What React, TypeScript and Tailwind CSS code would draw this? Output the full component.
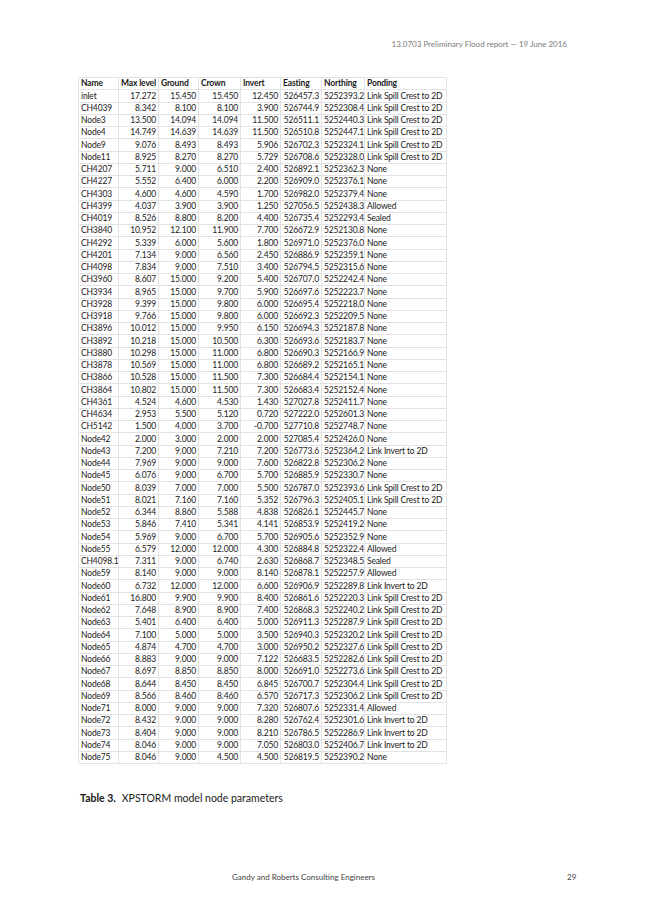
const rows: string[][] = [
  ["inlet", "17.272", "15.450", "15.450", "12.450", "526457.3", "5252393.2", "Link Spill Crest to 2D"],
  ["CH4039", "8.342", "8.100", "8.100", "3.900", "526744.9", "5252308.4", "Link Spill Crest to 2D"],
  ["Node3", "13.500", "14.094", "14.094", "11.500", "526511.1", "5252440.3", "Link Spill Crest to 2D"],
  ["Node4", "14.749", "14.639", "14.639", "11.500", "526510.8", "5252447.1", "Link Spill Crest to 2D"],
  ["Node9", "9.076", "8.493", "8.493", "5.906", "526702.3", "5252324.1", "Link Spill Crest to 2D"],
  ["Node11", "8.925", "8.270", "8.270", "5.729", "526708.6", "5252328.0", "Link Spill Crest to 2D"],
  ["CH4207", "5.711", "9.000", "6.510", "2.400", "526892.1", "5252362.3", "None"],
  ["CH4227", "5.552", "6.400", "6.000", "2.200", "526909.0", "5252376.1", "None"],
  ["CH4303", "4.600", "4.600", "4.590", "1.700", "526982.0", "5252379.4", "None"],
  ["CH4399", "4.037", "3.900", "3.900", "1.250", "527056.5", "5252438.3", "Allowed"],
  ["CH4019", "8.526", "8.800", "8.200", "4.400", "526735.4", "5252293.4", "Sealed"],
  ["CH3840", "10.952", "12.100", "11.900", "7.700", "526672.9", "5252130.8", "None"],
  ["CH4292", "5.339", "6.000", "5.600", "1.800", "526971.0", "5252376.0", "None"],
  ["CH4201", "7.134", "9.000", "6.560", "2.450", "526886.9", "5252359.1", "None"],
  ["CH4098", "7.834", "9.000", "7.510", "3.400", "526794.5", "5252315.6", "None"],
  ["CH3960", "8.607", "15.000", "9.200", "5.400", "526707.0", "5252242.4", "None"],
  ["CH3934", "8.965", "15.000", "9.700", "5.900", "526697.6", "5252223.7", "None"],
  ["CH3928", "9.399", "15.000", "9.800", "6.000", "526695.4", "5252218.0", "None"],
  ["CH3918", "9.766", "15.000", "9.800", "6.000", "526692.3", "5252209.5", "None"],
  ["CH3896", "10.012", "15.000", "9.950", "6.150", "526694.3", "5252187.8", "None"],
  ["CH3892", "10.218", "15.000", "10.500", "6.300", "526693.6", "5252183.7", "None"],
  ["CH3880", "10.298", "15.000", "11.000", "6.800", "526690.3", "5252166.9", "None"],
  ["CH3878", "10.569", "15.000", "11.000", "6.800", "526689.2", "5252165.1", "None"],
  ["CH3866", "10.528", "15.000", "11.500", "7.300", "526684.4", "5252154.1", "None"],
  ["CH3864", "10.802", "15.000", "11.500", "7.300", "526683.4", "5252152.4", "None"],
  ["CH4361", "4.524", "4.600", "4.530", "1.430", "527027.8", "5252411.7", "None"],
  ["CH4634", "2.953", "5.500", "5.120", "0.720", "527222.0", "5252601.3", "None"],
  ["CH5142", "1.500", "4.000", "3.700", "-0.700", "527710.8", "5252748.7", "None"],
  ["Node42", "2.000", "3.000", "2.000", "2.000", "527085.4", "5252426.0", "None"],
  ["Node43", "7.200", "9.000", "7.210", "7.200", "526773.6", "5252364.2", "Link Invert to 2D"],
  ["Node44", "7.969", "9.000", "9.000", "7.600", "526822.8", "5252306.2", "None"],
  ["Node45", "6.076", "9.000", "6.700", "5.700", "526885.9", "5252330.7", "None"],
  ["Node50", "8.039", "7.000", "7.000", "5.500", "526787.0", "5252393.6", "Link Spill Crest to 2D"],
  ["Node51", "8.021", "7.160", "7.160", "5.352", "526796.3", "5252405.1", "Link Spill Crest to 2D"],
  ["Node52", "6.344", "8.860", "5.588", "4.838", "526826.1", "5252445.7", "None"],
  ["Node53", "5.846", "7.410", "5.341", "4.141", "526853.9", "5252419.2", "None"],
  ["Node54", "5.969", "9.000", "6.700", "5.700", "526905.6", "5252352.9", "None"],
  ["Node55", "6.579", "12.000", "12.000", "4.300", "526884.8", "5252322.4", "Allowed"],
  ["CH4098.1", "7.311", "9.000", "6.740", "2.630", "526868.7", "5252348.5", "Sealed"],
  ["Node59", "8.140", "9.000", "9.000", "8.140", "526878.1", "5252257.9", "Allowed"],
  ["Node60", "6.732", "12.000", "12.000", "6.600", "526906.9", "5252289.8", "Link Invert to 2D"],
  ["Node61", "16.800", "9.900", "9.900", "8.400", "526861.6", "5252220.3", "Link Spill Crest to 2D"],
  ["Node62", "7.648", "8.900", "8.900", "7.400", "526868.3", "5252240.2", "Link Spill Crest to 2D"],
  ["Node63", "5.401", "6.400", "6.400", "5.000", "526911.3", "5252287.9", "Link Spill Crest to 2D"],
  ["Node64", "7.100", "5.000", "5.000", "3.500", "526940.3", "5252320.2", "Link Spill Crest to 2D"],
  ["Node65", "4.874", "4.700", "4.700", "3.000", "526950.2", "5252327.6", "Link Spill Crest to 2D"],
  ["Node66", "8.883", "9.000", "9.000", "7.122", "526683.5", "5252282.6", "Link Spill Crest to 2D"],
  ["Node67", "8.697", "8.850", "8.850", "8.000", "526691.0", "5252273.6", "Link Spill Crest to 2D"],
  ["Node68", "8.644", "8.450", "8.450", "6.845", "526700.7", "5252304.4", "Link Spill Crest to 2D"],
  ["Node69", "8.566", "8.460", "8.460", "6.570", "526717.3", "5252306.2", "Link Spill Crest to 2D"],
  ["Node71", "8.000", "9.000", "9.000", "7.320", "526807.6", "5252331.4", "Allowed"],
  ["Node72", "8.432", "9.000", "9.000", "8.280", "526762.4", "5252301.6", "Link Invert to 2D"],
  ["Node73", "8.404", "9.000", "9.000", "8.210", "526786.5", "5252286.9", "Link Invert to 2D"],
  ["Node74", "8.046", "9.000", "9.000", "7.050", "526803.0", "5252406.7", "Link Invert to 2D"],
  ["Node75", "8.046", "9.000", "4.500", "4.500", "526819.5", "5252390.2", "None"],
];

const headers = ["Name", "Max level", "Ground", "Crown", "Invert", "Easting", "Northing", "Ponding"];

// column widths in px, taken off the page
const widths = ["w-[40px]", "w-[40px]", "w-[40px]", "w-[42px]", "w-[40px]", "w-[41px]", "w-[43px]", "w-[82px]"];
const align = ["text-left", "text-right", "text-right", "text-right", "text-right", "text-right", "text-right", "text-left"];

function App() {
  return (
    <div className="w-[647px] h-[914px] bg-white flex flex-col font-['Lato','Liberation_Sans',sans-serif] text-[#1a1a1a]">
      <div className="pt-[38px] pr-[80px] text-right text-[8px] text-[#7a7a7a]">
        13.0703 Preliminary Flood report — 19 June 2016
      </div>
      <div className="pl-[78px] pt-[27px]">
        <table className="table-fixed w-[368px] border-collapse text-[8.5px] leading-none tracking-[-0.15px]">
          <colgroup>
            {widths.map((w, i) => (
              <col key={i} className={w} />
            ))}
          </colgroup>
          <thead>
            <tr className="h-[12.25px]">
              {headers.map((h) => (
                <th
                  key={h}
                  className="border border-[#e2e2e2] px-[2px] font-bold text-left whitespace-nowrap overflow-hidden"
                >
                  {h}
                </th>
              ))}
            </tr>
          </thead>
          <tbody>
            {rows.map((r) => (
              <tr key={r[0]} className="h-[12.25px]">
                {r.map((c, i) => (
                  <td
                    key={i}
                    className={`${align[i]} border border-[#e2e2e2] px-[2px] whitespace-nowrap overflow-hidden`}
                  >
                    {c}
                  </td>
                ))}
              </tr>
            ))}
          </tbody>
        </table>
      </div>
      <div className="pl-[80px] pt-[27px] text-[10.5px]">
        <span className="font-bold">Table 3.</span>
        <span className="pl-[6px]">XPSTORM model node parameters</span>
      </div>
      <div className="mt-auto mb-[31px] flex items-center text-[8px] text-[#444]">
        <div className="flex-1 text-center pl-[40px]">Gandy and Roberts Consulting Engineers</div>
        <div className="w-[80px] pr-[75px] text-right">29</div>
      </div>
    </div>
  );
}

export default App;
